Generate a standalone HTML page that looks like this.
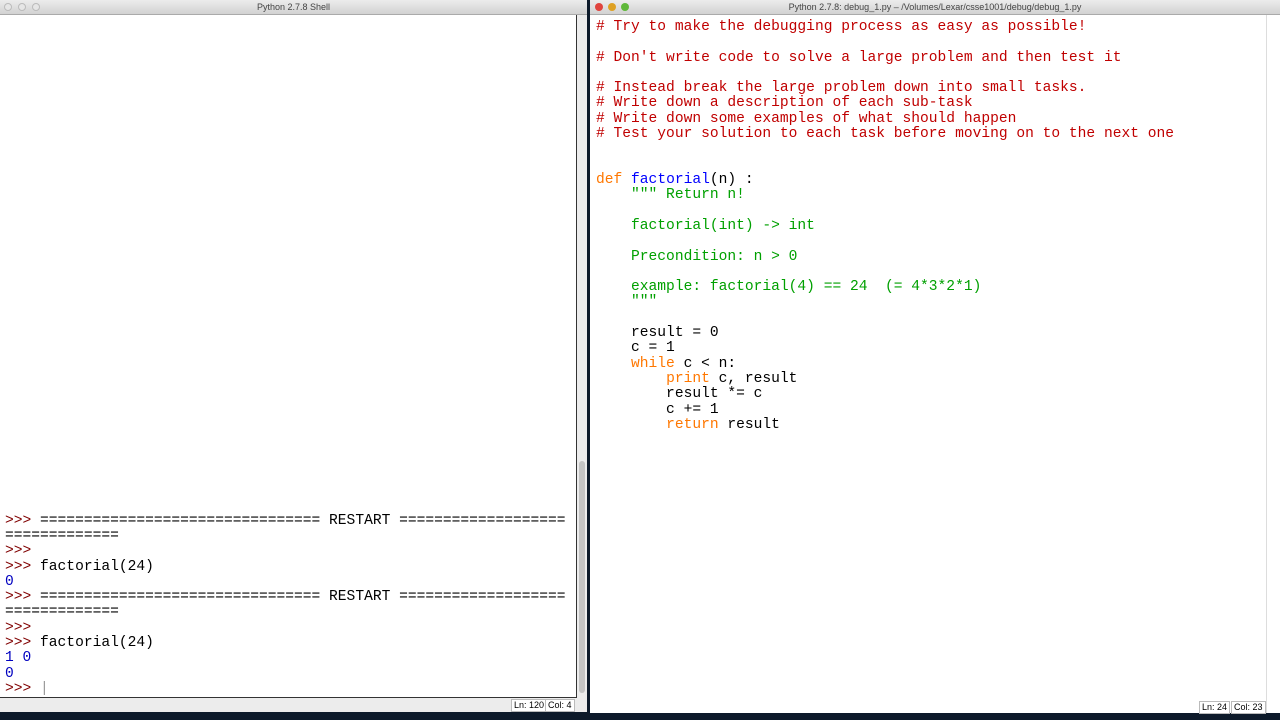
<!DOCTYPE html>
<html><head><meta charset="utf-8"><style>
body{margin:0;width:1280px;height:720px;overflow:hidden;background:#0d1a2a;position:relative;font-family:"Liberation Mono",monospace}
.win{position:absolute;background:#fff}
.tb{position:absolute;left:0;right:0;top:0;height:14px;background:linear-gradient(#ececec,#d2d2d2);border-bottom:1px solid #aaa;font:9px "Liberation Sans",sans-serif;color:#444;text-align:center;line-height:14px}
.dot{position:absolute;top:3px;width:8px;height:8px;border-radius:50%}
.l{position:absolute;white-space:pre;font-size:14.6px;line-height:15px;color:#000;margin-top:2px}
.c{color:#c00000}.k{color:#ff7700}.f{color:#0000ff}.s{color:#00a000}.p{color:#800000}.o{color:#0000c0}
.st{position:absolute;font:9px "Liberation Sans",sans-serif;border:1px solid #bbb;background:#fff;padding:0 2px;line-height:11px}
</style></head><body>
<div class="win" style="left:0;top:0;width:587px;height:712px;background:#ececec">
 <div class="tb">Python 2.7.8 Shell
  <div class="dot" style="left:4px;border:1px solid #bbb;background:#e6e6e6;width:6px;height:6px"></div>
  <div class="dot" style="left:18px;border:1px solid #bbb;background:#e6e6e6;width:6px;height:6px"></div>
  <div class="dot" style="left:32px;border:1px solid #bbb;background:#e6e6e6;width:6px;height:6px"></div>
 </div>
 <div style="position:absolute;left:0;top:15px;width:576px;height:682px;background:#fff;border-right:1px solid #333;border-bottom:1px solid #333"></div>
 <div style="position:absolute;left:579px;top:461px;width:6px;height:232px;background:#c4c4c4;border-radius:3px"></div>
 <div class="st" style="left:511px;top:699px">Ln: 120</div><div class="st" style="left:545px;top:699px">Col: 4</div>
</div>
<div class="l" style="left:5px;top:512px"><span class="p">&gt;&gt;&gt;</span> ================================ RESTART ===================</div>
<div class="l" style="left:5px;top:527px">=============</div>
<div class="l p" style="left:5px;top:542px">&gt;&gt;&gt;</div>
<div class="l" style="left:5px;top:558px"><span class="p">&gt;&gt;&gt;</span> factorial(24)</div>
<div class="l o" style="left:5px;top:573px">0</div>
<div class="l" style="left:5px;top:588px"><span class="p">&gt;&gt;&gt;</span> ================================ RESTART ===================</div>
<div class="l" style="left:5px;top:603px">=============</div>
<div class="l p" style="left:5px;top:619px">&gt;&gt;&gt;</div>
<div class="l" style="left:5px;top:634px"><span class="p">&gt;&gt;&gt;</span> factorial(24)</div>
<div class="l o" style="left:5px;top:649px">1 0</div>
<div class="l o" style="left:5px;top:665px">0</div>
<div class="l" style="left:5px;top:680px"><span class="p">&gt;&gt;&gt;</span> <span style="color:#999">|</span></div>

<div class="win" style="left:590px;top:0;width:690px;height:713px">
 <div class="tb">Python 2.7.8: debug_1.py – /Volumes/Lexar/csse1001/debug/debug_1.py
  <div class="dot" style="left:5px;background:#e0443e"></div>
  <div class="dot" style="left:18px;background:#dea123"></div>
  <div class="dot" style="left:31px;background:#5fb83a"></div>
 </div>
 <div class="st" style="left:609px;top:701px">Ln: 24</div><div class="st" style="left:641px;top:701px">Col: 23</div>
 <div style="position:absolute;left:676px;top:15px;width:1px;height:698px;background:#ddd"></div>
</div>
<div class="l c" style="left:596px;top:18px"># Try to make the debugging process as easy as possible!</div>
<div class="l c" style="left:596px;top:49px"># Don't write code to solve a large problem and then test it</div>
<div class="l c" style="left:596px;top:79px"># Instead break the large problem down into small tasks.</div>
<div class="l c" style="left:596px;top:94px"># Write down a description of each sub-task</div>
<div class="l c" style="left:596px;top:110px"># Write down some examples of what should happen</div>
<div class="l c" style="left:596px;top:125px"># Test your solution to each task before moving on to the next one</div>
<div class="l" style="left:596px;top:171px"><span class="k">def</span> <span class="f">factorial</span>(n) :</div>
<div class="l s" style="left:596px;top:186px">    """ Return n!</div>
<div class="l s" style="left:596px;top:217px">    factorial(int) -&gt; int</div>
<div class="l s" style="left:596px;top:248px">    Precondition: n &gt; 0</div>
<div class="l s" style="left:596px;top:278px">    example: factorial(4) == 24  (= 4*3*2*1)</div>
<div class="l s" style="left:596px;top:293px">    """</div>
<div class="l" style="left:596px;top:324px">    result = 0</div>
<div class="l" style="left:596px;top:339px">    c = 1</div>
<div class="l" style="left:596px;top:355px">    <span class="k">while</span> c &lt; n:</div>
<div class="l" style="left:596px;top:370px">        <span class="k">print</span> c, result</div>
<div class="l" style="left:596px;top:385px">        result *= c</div>
<div class="l" style="left:596px;top:401px">        c += 1</div>
<div class="l" style="left:596px;top:416px">        <span class="k">return</span> result</div>
</body></html>
